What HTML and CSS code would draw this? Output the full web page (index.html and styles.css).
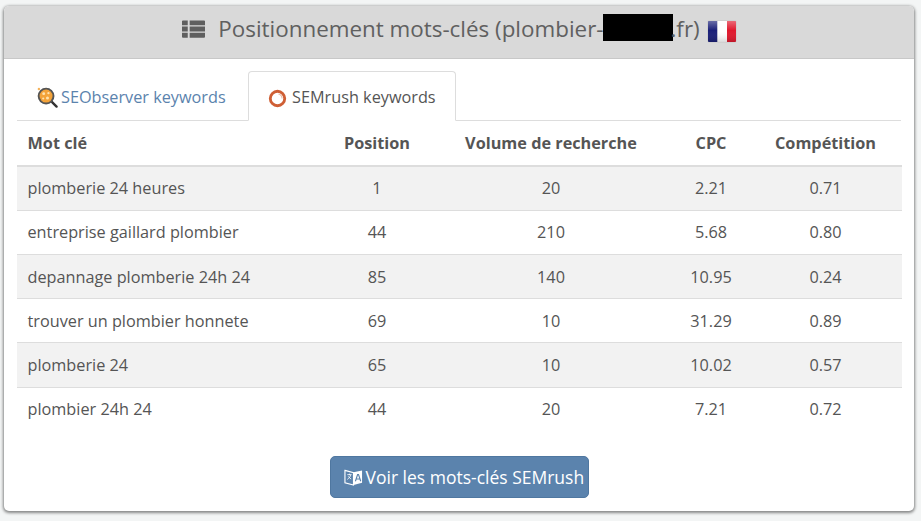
FILE: index.html
```html
<!DOCTYPE html>
<html lang="fr">
<head>
<meta charset="utf-8">
<title>Positionnement mots-clés</title>
<link rel="stylesheet" href="styles.css">
</head>
<body>
<section class="panel">
  <header class="panel-head">
    <svg class="icon-list" viewBox="0 0 24 18" aria-hidden="true"><path d="M0 1a1 1 0 0 1 1-1h5v5H0zM8 0h15a1 1 0 0 1 1 1v4H8zM0 6.500h6v5H0zM8 6.500h16v5H8zM0 13h6v5H1a1 1 0 0 1-1-1zM8 13h16v4a1 1 0 0 1-1 1H8z"/></svg>
    <h1 class="title">Positionnement mots-clés (plombier-<span class="redact"></span>.fr)</h1>
    <svg class="flag" viewBox="0 0 28 21" aria-hidden="true">
      <defs><linearGradient id="sheen" x1="0" y1="0" x2="0" y2="1"><stop offset="0" stop-color="#fff" stop-opacity=".35"/><stop offset=".45" stop-color="#fff" stop-opacity="0"/><stop offset="1" stop-color="#000" stop-opacity=".15"/></linearGradient></defs>
      <rect width="9.500" height="21" fill="#1a1f78"/><rect x="9.500" width="9.500" height="21" fill="#fff"/><rect x="19" width="9" height="21" fill="#e0182d"/><rect width="28" height="21" fill="url(#sheen)"/>
    </svg>
  </header>
  <div class="panel-body">
    <nav class="tabs">
      <a class="tab tab-link">
        <svg class="tab-icon" viewBox="0 0 22 22" aria-hidden="true"><line x1="14" y1="14" x2="20.500" y2="20.500" stroke="#333" stroke-width="2.500" stroke-linecap="round"/><circle cx="9.500" cy="9.500" r="7.800" fill="#f3a33a" stroke="#555" stroke-width="2"/><circle cx="7" cy="7" r="1.500" fill="#ffe3b0"/><circle cx="12" cy="6.500" r="1.200" fill="#ffe3b0"/><circle cx="11" cy="11.500" r="1.600" fill="#ffe3b0"/><circle cx="6.500" cy="12" r="1.100" fill="#ffe3b0"/><circle cx="2" cy="2" r="1.300" fill="#f5b25a"/></svg>
        SEObserver keywords
      </a>
      <a class="tab tab-active">
        <svg class="tab-icon semrush" viewBox="0 0 20 20" aria-hidden="true"><circle cx="10" cy="10" r="7.600" fill="none" stroke="#cf5f35" stroke-width="3"/><path d="M11 5.200a5 5 0 0 1 3.800 4.800" fill="none" stroke="#e9b9a5" stroke-width="1.200"/></svg>
        SEMrush keywords
      </a>
    </nav>
    <table class="kw">
      <colgroup><col class="c1"><col class="c2"><col class="c3"><col class="c4"><col class="c5"></colgroup>
      <thead><tr><th class="left">Mot clé</th><th>Position</th><th>Volume de recherche</th><th>CPC</th><th>Compétition</th></tr></thead>
      <tbody>
        <tr><td class="left">plomberie 24 heures</td><td>1</td><td>20</td><td>2.21</td><td>0.71</td></tr>
        <tr><td class="left">entreprise gaillard plombier</td><td>44</td><td>210</td><td>5.68</td><td>0.80</td></tr>
        <tr><td class="left">depannage plomberie 24h 24</td><td>85</td><td>140</td><td>10.95</td><td>0.24</td></tr>
        <tr><td class="left">trouver un plombier honnete</td><td>69</td><td>10</td><td>31.29</td><td>0.89</td></tr>
        <tr><td class="left">plomberie 24</td><td>65</td><td>10</td><td>10.02</td><td>0.57</td></tr>
        <tr><td class="left">plombier 24h 24</td><td>44</td><td>20</td><td>7.21</td><td>0.72</td></tr>
      </tbody>
    </table>
    <div class="actions">
      <a class="btn">
        <svg class="btn-icon" viewBox="0 0 20 20" aria-hidden="true"><path d="M1 2.500 10 5v13l-9-2.500z" fill="none" stroke="#fff" stroke-width="1.200"/><path d="M10 4.500 19 2.500v13l-9 2.500z" fill="#fff"/><path d="M3.500 7h4.500M5.700 6v1.500M7 7.500c-.5 2-2 3.500-3.500 4.500M4.500 8.800c.8 1.300 2 2.200 3 2.800" fill="none" stroke="#fff" stroke-width=".9"/><path d="M12 14l2.300-7h1l2.300 7M12.900 11.600h3.800" fill="none" stroke="#5b83ad" stroke-width="1.200"/></svg>
        Voir les mots-clés SEMrush
      </a>
    </div>
  </div>
</section>
</body>
</html>
```

FILE: styles.css
```css
* { box-sizing: border-box; }

html, body { height: 100%; }

body {
  margin: 0;
  padding: 6px 7px 10px 4px;
  background: #f3f5f5;
  color: #555;
  font-family: "Open Sans", "Liberation Sans", sans-serif;
  font-size: 16.250px;
  overflow: hidden;
}

.panel {
  height: 505px;
  background: #fff;
  border-radius: 5px;
  box-shadow: 0 1px 3px 1px rgba(0, 0, 0, .45);
  display: flex;
  flex-direction: column;
  overflow: hidden;
}

.panel-head {
  height: 53px;
  flex: none;
  background: #d9d9d9;
  border-bottom: 1px solid #c8c8c8;
  display: flex;
  align-items: center;
  justify-content: center;
  padding: 0 0 6px;
}

.icon-list {
  width: 23px;
  height: 18px;
  fill: #5f5f5f;
  margin-right: 13px;
}

.title {
  margin: 0;
  font-size: 22.400px;
  font-weight: 400;
  line-height: 30px;
  color: #606060;
}

.redact {
  background: #000;
  display: inline-block;
  width: 70px;
  height: 27px;
  margin-right: -3px;
  vertical-align: top;
}

.flag {
  width: 28px;
  height: 21px;
  margin-left: 8px;
  margin-top: 4px;
  border-radius: 1px;
  box-shadow: 0 0 1px rgba(0, 0, 0, .4);
}

.panel-body {
  flex: 1;
  display: flex;
  flex-direction: column;
  padding: 12px 13px 0;
}

.tabs {
  display: flex;
  height: 50px;
  flex: none;
  border-bottom: 1px solid #ddd;
}

.tab {
  display: flex;
  align-items: center;
  height: 50px;
  padding: 0 19px;
  border: 1px solid transparent;
  border-radius: 4px 4px 0 0;
}

.tab-link {
  color: #5b83ad;
  width: 231px;
  padding-top: 2px;
}

.tab-active {
  color: #555;
  background: #fff;
  border-color: #ddd;
  border-bottom-color: #fff;
  padding-top: 2px;
}

.tab-icon {
  width: 21px;
  height: 21px;
  margin-right: 3px;
  flex: none;
}

.semrush {
  width: 19px;
  height: 19px;
  margin-top: 2px;
  margin-right: 5px;
}

.kw {
  width: 885px;
  table-layout: fixed;
  border-collapse: collapse;
}

.c1 { width: 308px; }
.c2 { width: 104px; }
.c3 { width: 244px; }
.c4 { width: 76px; }
.c5 { width: 153px; }

.kw th,
.kw td {
  text-align: center;
  padding: 0;
}

.kw .left {
  text-align: left;
  padding-left: 10.500px;
}

.kw th {
  height: 45px;
  font-weight: 700;
  border-bottom: 2px solid #ddd;
}

.kw td {
  height: 44.230px;
  border-top: 1px solid #ddd;
}

.kw thead + tbody tr:first-child td { border-top: 0; }

.kw tbody tr:nth-child(odd) { background: #f2f2f2; }

.actions {
  display: flex;
  justify-content: center;
  margin-top: 25px;
}

.btn {
  display: flex;
  align-items: center;
  width: 259px;
  height: 42px;
  padding-left: 13px;
  background: #5b83ad;
  border: 1px solid #4f77a0;
  border-radius: 5px;
  color: #fff;
  font-size: 17.500px;
  white-space: nowrap;
}

.btn-icon {
  width: 19px;
  height: 21px;
  margin-right: 3px;
  flex: none;
}
```
